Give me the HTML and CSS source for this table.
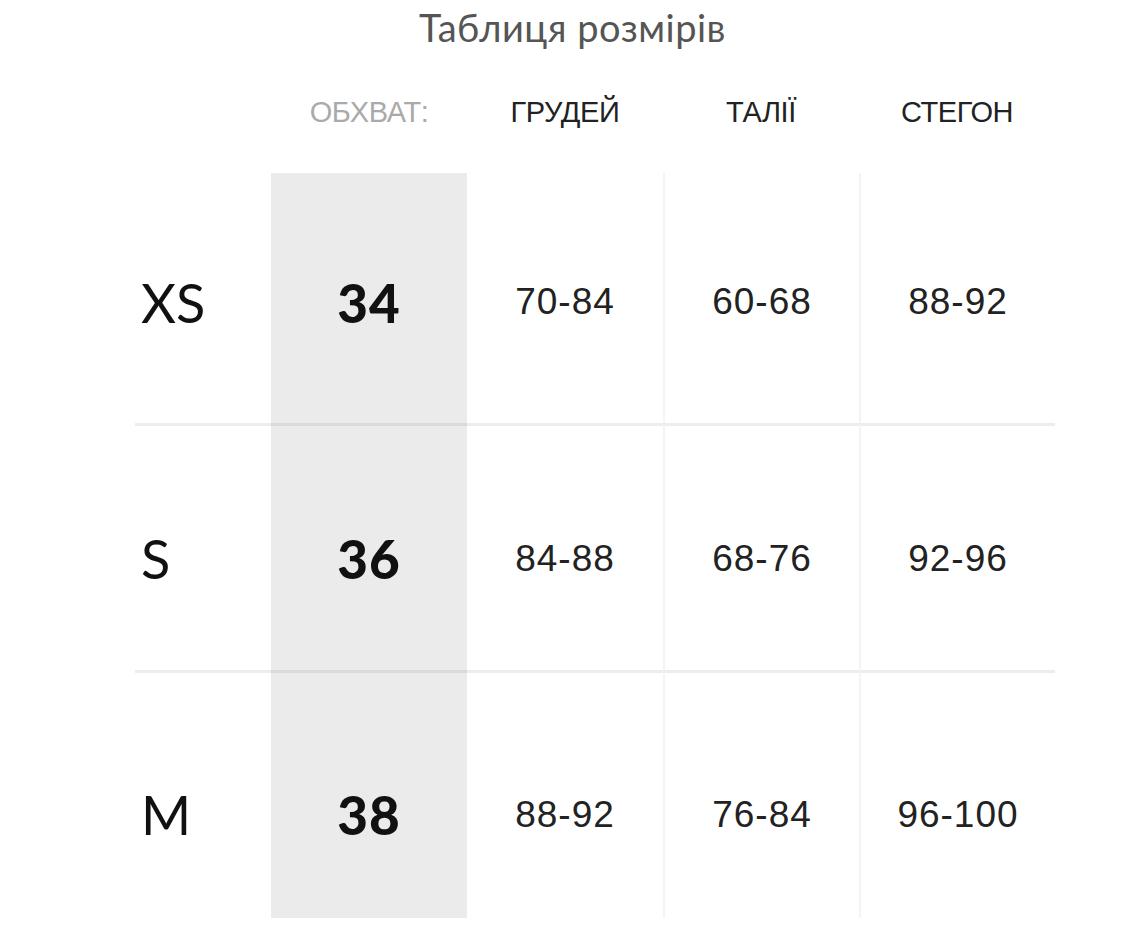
FILE: index.html
```html
<!DOCTYPE html>
<html lang="uk">
<head>
<meta charset="utf-8">
<title>Таблиця розмірів</title>
<link rel="stylesheet" href="styles.css">
</head>
<body>
<h1 class="title">Таблиця розмірів</h1>
<div class="chart">
  <div class="cell head"></div>
  <div class="cell head muted">ОБХВАТ:</div>
  <div class="cell head">ГРУДЕЙ</div>
  <div class="cell head">ТАЛІЇ</div>
  <div class="cell head">СТЕГОН</div>

  <div class="cell r1 size">XS</div>
  <div class="cell r1 num">34</div>
  <div class="cell r1 val">70-84</div>
  <div class="cell r1 val vline">60-68</div>
  <div class="cell r1 val vline">88-92</div>

  <div class="cell r2 size sep">S</div>
  <div class="cell r2 num sep">36</div>
  <div class="cell r2 val sep">84-88</div>
  <div class="cell r2 val vline sep">68-76</div>
  <div class="cell r2 val vline sep">92-96</div>

  <div class="cell r3 size sep">M</div>
  <div class="cell r3 num sep">38</div>
  <div class="cell r3 val sep">88-92</div>
  <div class="cell r3 val vline sep">76-84</div>
  <div class="cell r3 val vline sep">96-100</div>
</div>
</body>
</html>
```

FILE: styles.css
```css
html, body {
  margin: 0;
  padding: 0;
  background: #ffffff;
}

.title {
  margin: 6px 0 0 0;
  padding-left: 10px;
  height: 42px;
  line-height: 42px;
  text-align: center;
  font-family: "Lato", "Noto Sans", sans-serif;
  font-weight: 400;
  font-size: 38px;
  color: #555555;
  letter-spacing: 0.5px;
}

.chart {
  margin-left: 135px;
  width: 920px;
  display: grid;
  grid-template-columns: 136px repeat(4, 196px);
  grid-template-rows: 125px 250px 247px 248px;
}

.cell {
  display: flex;
  align-items: center;
  justify-content: center;
  box-sizing: border-box;
}

.head {
  font-family: "Liberation Sans", Arial, sans-serif;
  font-size: 29px;
  color: #222222;
  letter-spacing: -0.4px;
  padding-top: 4px;
}

.head.muted {
  color: #aaaaaa;
}

.r1 { padding-top: 8px; }
.r2 { padding-top: 21px; }
.r3 { padding-top: 38px; }

.size {
  justify-content: flex-start;
  padding-left: 6px;
  font-family: "Lato", "Noto Sans", sans-serif;
  font-weight: 400;
  font-size: 54px;
  color: #111111;
}

.num {
  background: #ebebeb;
  font-family: "Lato", "Noto Sans", sans-serif;
  font-weight: 900;
  font-size: 53px;
  color: #111111;
  letter-spacing: 1px;
}

.val {
  font-family: "Liberation Sans", Arial, sans-serif;
  font-size: 37px;
  color: #222222;
  letter-spacing: 1px;
}

.vline {
  border-left: 2px solid #f4f4f4;
}

.sep {
  border-top: 3px solid rgba(0, 0, 0, 0.07);
}
```
